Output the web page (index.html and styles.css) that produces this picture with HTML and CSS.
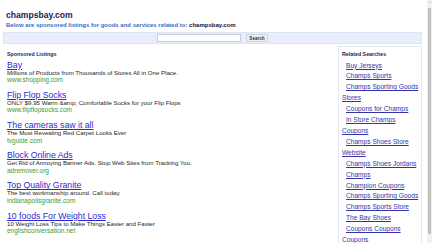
FILE: index.html
```html
<!DOCTYPE html>
<html lang="en">

<head>
    <meta charset="UTF-8">
    <meta name="viewport" content="width=device-width, initial-scale=1.0">
    <title>champsbay.com</title>
    <link rel="stylesheet" href="styles.css">
</head>

<body>
<div class="page">
    <div class="header">
        <h1>champsbay.com</h1>
        <p>Below are sponsored listings for goods and services related to: <span>champsbay.com</span></p>
    </div>

    <div class="search-bar">
        <input type="text" class="search-input">
        <button class="search-btn">Search</button>
    </div>

    <div class="content">
        <div class="listings">
            <div class="heading">Sponsored Listings</div>

            <div class="listing">
                <a href="#" class="listing-title">Bay</a>
                <div class="listing-desc">Millions of Products from Thousands of Stores All in One Place.</div>
                <div class="listing-url">www.shopping.com</div>
            </div>
            <div class="listing">
                <a href="#" class="listing-title">Flip Flop Socks</a>
                <div class="listing-desc">ONLY $9.95 Warm &amp;amp; Comfortable Socks for your Flip Flops</div>
                <div class="listing-url">www.flipflopsocks.com</div>
            </div>
            <div class="listing">
                <a href="#" class="listing-title">The cameras saw it all</a>
                <div class="listing-desc">The Most Revealing Red Carpet Looks Ever</div>
                <div class="listing-url">tvguide.com</div>
            </div>
            <div class="listing">
                <a href="#" class="listing-title">Block Online Ads</a>
                <div class="listing-desc">Get Rid of Annoying Banner Ads. Stop Web Sites from Tracking You.</div>
                <div class="listing-url">adremover.org</div>
            </div>
            <div class="listing">
                <a href="#" class="listing-title">Top Quality Granite</a>
                <div class="listing-desc">The best workmanship around. Call today.</div>
                <div class="listing-url">indianapolisgranite.com</div>
            </div>
            <div class="listing">
                <a href="#" class="listing-title">10 foods For Weight Loss</a>
                <div class="listing-desc">10 Weight Loss Tips to Make Things Easier and Faster</div>
                <div class="listing-url">englishconversation.net</div>
            </div>
        </div>

        <div class="related">
            <div class="heading">Related Searches</div>
            <a href="#">Buy Jerseys</a>
            <a href="#">Champs Sports</a>
            <a href="#">Champs Sporting Goods Stores</a>
            <a href="#">Coupons for Champs</a>
            <a href="#">In Store Champs Coupons</a>
            <a href="#">Champs Shoes Store Website</a>
            <a href="#">Champs Shoes Jordans</a>
            <a href="#">Champs</a>
            <a href="#">Champion Coupons</a>
            <a href="#">Champs Sporting Goods</a>
            <a href="#">Champs Sports Store</a>
            <a href="#">The Bay Shoes</a>
            <a href="#">Coupons Coupons Coupons</a>
        </div>
    </div>
</div>

<!-- scrollbar as it shows in the reference -->
<div class="scrollbar">
    <div class="scroll-arrow"></div>
    <div class="scroll-thumb"></div>
</div>
</body>

</html>
```

FILE: styles.css
```css
html,
body {
    overflow: hidden;
}

body {
    margin: 0;
    background-color: #ffffff;
    font-family: "Liberation Sans", Arial, Helvetica, sans-serif;
    color: #222222;
}

.page {
    width: 419px;
    margin-left: 3px;
}

.header {
    padding: 10px 0 0 3px;
}

.header h1 {
    margin: 0;
    font-size: 8.6px;
    line-height: 10.5px;
    color: #1b1b4f;
}

.header p {
    margin: 0;
    font-size: 6px;
    line-height: 9px;
    font-weight: bold;
    color: #4068c8;
}

.header p span {
    color: #111133;
}

.search-bar {
    display: flex;
    justify-content: center;
    align-items: center;
    gap: 5px;
    height: 10px;
    margin-top: 2.5px;
    background-color: #e8eefb;
    border: 1px solid #dde5f4;
}

.search-input {
    box-sizing: border-box;
    width: 84px;
    height: 8px;
    padding: 0;
    border: 1px solid #c8cdd6;
    background-color: #ffffff;
}

.search-btn {
    box-sizing: border-box;
    width: 22px;
    height: 8px;
    padding: 0;
    font-family: inherit;
    font-size: 4.6px;
    font-weight: bold;
    color: #333333;
    background-color: #efefef;
    border: 1px solid #cfd3da;
    border-radius: 1px;
}

.content {
    display: grid;
    grid-template-columns: 1fr 84.5px;
    margin-top: 2px;
}

.heading {
    font-size: 5.3px;
    line-height: 7px;
    font-weight: bold;
    color: #1d1d5c;
}

.listings {
    padding: 5.4px 0 0 4px;
}

.listings .heading {
    margin-bottom: 1.3px;
}

.listing {
    margin-bottom: 6.6px;
}

.listing-title {
    display: block;
    font-size: 8.7px;
    line-height: 10px;
    color: #2b2bd6;
}

.listing-desc {
    font-size: 6.1px;
    line-height: 6.6px;
    color: #1e1e1e;
}

.listing-url {
    font-size: 6.5px;
    line-height: 7px;
    color: #3b9a3b;
}

.related {
    box-sizing: border-box;
    border: 1px solid #e3e8f3;
    border-bottom: none;
    padding: 3.7px 2px 0 3.5px;
}

.related .heading {
    margin-bottom: 2.9px;
}

.related a {
    display: block;
    text-indent: 4px;
    font-size: 6.6px;
    line-height: 10.9px;
    color: #3434aa;
}

.scrollbar {
    position: fixed;
    top: 0;
    right: 0;
    bottom: 0;
    width: 5px;
    background-color: #f1f1f1;
}

.scroll-arrow {
    width: 0;
    height: 0;
    margin: 2px auto 0;
    border-left: 1.5px solid transparent;
    border-right: 1.5px solid transparent;
    border-bottom: 1.5px solid #a3a3a3;
}

.scroll-thumb {
    width: 3px;
    height: 226px;
    margin: 5px auto 0;
    background-color: #c1c1c1;
}
```
